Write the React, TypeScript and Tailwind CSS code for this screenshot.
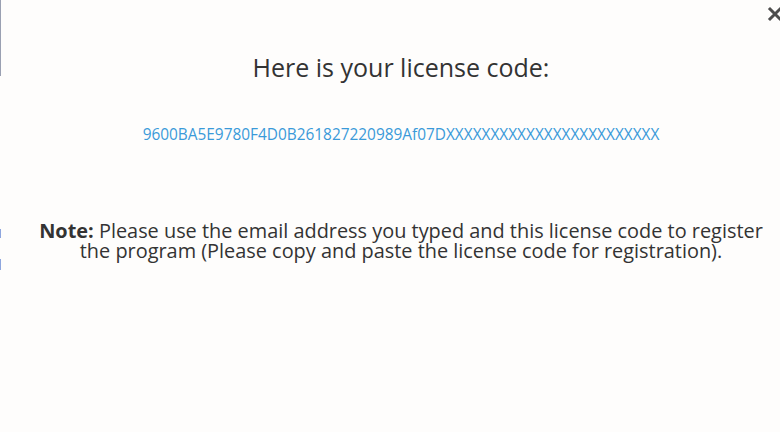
export default function App() {
  return (
    <div className="relative h-[432px] w-[780px] overflow-hidden bg-[#fefdfc] font-['Open_Sans',sans-serif]">
      {/* edge bits of the page behind the modal */}
      <div className="absolute left-0 top-0 h-[76px] w-px bg-[#9aa0b2]" />
      <div className="absolute left-0 top-[229px] h-[9px] w-px bg-[#8ea6de]" />
      <div className="absolute left-0 top-[259px] h-[11px] w-px bg-[#8ea6de]" />

      <button className="absolute left-[767px] top-[6px] h-[16px] w-[16px] text-[#4d4d4d]">
        <svg viewBox="0 0 16 16" className="h-[16px] w-[16px]">
          <path d="M3 3 L13 13 M13 3 L3 13" stroke="currentColor" strokeWidth="3" strokeLinecap="square" />
        </svg>
      </button>

      <div className="flex flex-col items-center pl-[22px]">
        <h2 className="mt-[51px] text-[25px] leading-[32px] text-[#333]">Here is your license code:</h2>
        <p className="mt-[42px] text-[15.4px] leading-[20px] text-[#3a9ad9]">
          9600BA5E9780F4D0B261827220989Af07DXXXXXXXXXXXXXXXXXXXXXXXX
        </p>
        <div className="mt-[76px] flex flex-col items-center text-[19.9px] leading-[20px] text-[#333]">
          <div className="h-[20px]">
            <span className="inline-block font-bold">Note:</span>{' '}
            <span className="inline-block">Please use the email address you typed and this license code to register</span>
          </div>
          <div className="h-[20px]">
            <span className="inline-block">the program (Please copy and paste the license code for registration).</span>
          </div>
        </div>
      </div>
    </div>
  )
}
